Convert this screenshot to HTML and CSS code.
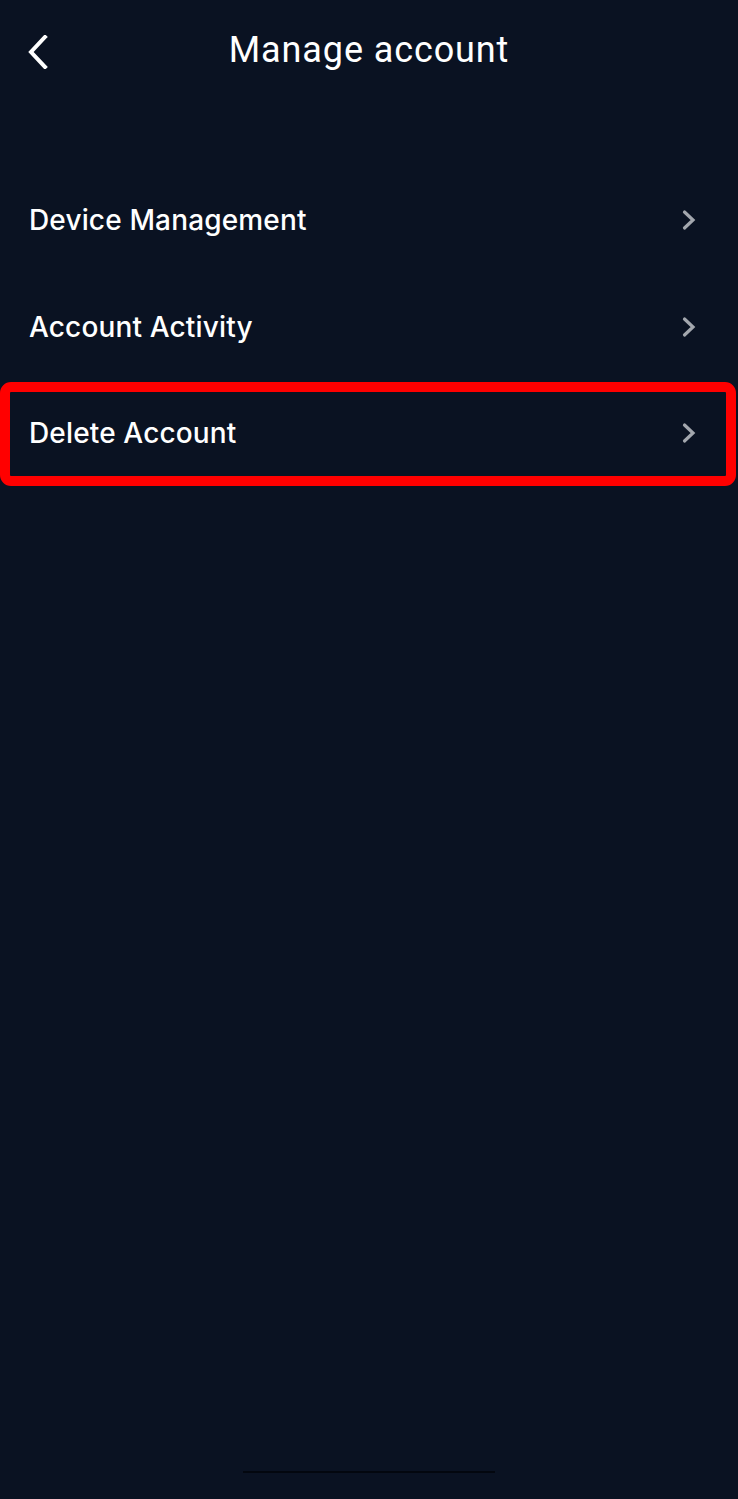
FILE: index.html
```html
<!DOCTYPE html>
<html>
<head>
<meta charset="utf-8">
<link rel="stylesheet" href="styles.css">
</head>
<body>
<div class="screen">
  <header class="topbar">
    <button class="back" aria-label="Back">
      <svg width="22" height="34" viewBox="0 0 22 34"><path d="M18 2 L4 17 L18 32" fill="none" stroke="#ffffff" stroke-width="4" stroke-linecap="square" stroke-linejoin="miter"/></svg>
    </button>
    <h1 class="title">Manage account</h1>
  </header>
  <ul class="menu">
    <li class="row"><span class="label">Device Management</span><svg class="chev" width="16" height="22" viewBox="0 0 16 22"><path d="M3.5 3 L12 11 L3.5 19" fill="none" stroke="#a3a7ae" stroke-width="3.2" stroke-linecap="round" stroke-linejoin="miter"/></svg></li>
    <li class="row"><span class="label">Account Activity</span><svg class="chev" width="16" height="22" viewBox="0 0 16 22"><path d="M3.5 3 L12 11 L3.5 19" fill="none" stroke="#a3a7ae" stroke-width="3.2" stroke-linecap="round" stroke-linejoin="miter"/></svg></li>
    <li class="row highlighted"><span class="label">Delete Account</span><svg class="chev" width="16" height="22" viewBox="0 0 16 22"><path d="M3.5 3 L12 11 L3.5 19" fill="none" stroke="#a3a7ae" stroke-width="3.2" stroke-linecap="round" stroke-linejoin="miter"/></svg></li>
  </ul>
  <div class="spacer"></div>
  <div class="home-indicator"></div>
</div>
</body>
</html>
```
FILE: styles.css
```css
html, body {
  margin: 0;
  padding: 0;
  background: #0a1222;
}
.screen {
  width: 738px;
  height: 1499px;
  display: flex;
  flex-direction: column;
  background: #0a1222;
  color: #ffffff;
  font-family: Inter, "Noto Sans", sans-serif;
  overflow: hidden;
}
.topbar {
  height: 100px;
  display: flex;
  align-items: center;
  justify-content: center;
  position: relative;
}
.back {
  position: absolute;
  left: 27px;
  top: 35px;
  padding: 0;
  margin: 0;
  border: 0;
  background: none;
  display: block;
  line-height: 0;
}
.title {
  margin: 0;
  font-family: Roboto, "Liberation Sans", sans-serif;
  font-weight: 400;
  font-size: 36px;
  letter-spacing: 0.9px;
  color: #ffffff;
  line-height: 1;
}
.menu {
  list-style: none;
  margin: 67px 0 0 0;
  padding: 0;
}
.row {
  height: 106.5px;
  display: flex;
  align-items: center;
  justify-content: space-between;
  padding: 0 41px 0 29px;
  position: relative;
}
.label {
  font-size: 28px;
  font-weight: 500;
  color: #ffffff;
  letter-spacing: 0.15px;
}
.chev {
  display: block;
}
.highlighted::after {
  content: "";
  position: absolute;
  left: 0;
  right: 2px;
  top: 2px;
  bottom: 1px;
  border: 10px solid #ff0000;
  border-radius: 11px;
  pointer-events: none;
}
.spacer {
  flex: 1;
}
.home-indicator {
  width: 252px;
  height: 2px;
  background: #03070f;
  margin: 0 auto 26px auto;
}
```
